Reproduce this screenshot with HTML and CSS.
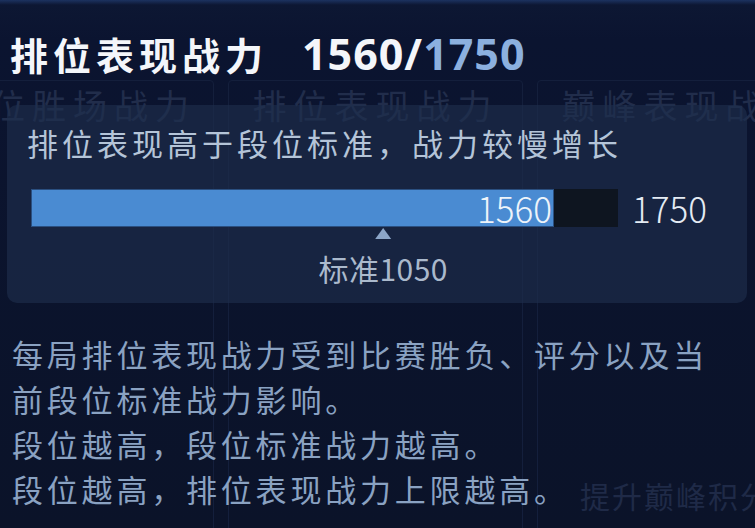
FILE: index.html
```html
<!DOCTYPE html>
<html lang="zh-CN">
<head>
  <meta charset="UTF-8">
  <meta name="viewport" content="width=device-width, initial-scale=1.0">
  <title>排位表现战力</title>
  <link rel="stylesheet" href="styles.css">
</head>
<body>
  <div class="screen">
    <!-- page underneath the popup -->
    <div class="cards">
      <div class="card"><div class="card-title">排位胜场战力</div></div>
      <div class="card"><div class="card-title">排位表现战力</div></div>
      <div class="card">
        <div class="card-title">巅峰表现战力</div>
        <div class="card-foot">提升巅峰积分</div>
      </div>
    </div>

    <!-- popup -->
    <div class="popup">
      <h2 class="popup-title">
        <span class="name">排位表现战力</span>
        <span class="score">1560/<span class="max">1750</span></span>
      </h2>

      <div class="panel">
        <p class="panel-text">排位表现高于段位标准，战力较慢增长</p>
        <div class="bar-row">
          <div class="bar">
            <div class="bar-fill" style="width: 89.1%;"><span>1560</span></div>
            <div class="marker" style="left: 60%;">
              <span class="arrow"></span>
              <span class="marker-label">标准1050</span>
            </div>
          </div>
          <span class="bar-max">1750</span>
        </div>
      </div>

      <p class="desc">
        每局排位表现战力受到比赛胜负、评分以及当<br>
        前段位标准战力影响。<br>
        段位越高，段位标准战力越高。<br>
        段位越高，排位表现战力上限越高。
      </p>
    </div>
  </div>
</body>
</html>
```

FILE: styles.css
```css
body {
  margin: 0;
  background-color: #0b1430;
  font-family: "Noto Sans CJK SC", "Noto Sans", sans-serif;
}
.screen {
  position: relative;
  width: 755px;
  height: 528px;
  overflow: hidden;
  background: linear-gradient(#1c3260 0, #0d1733 5px, #0b1430 40px, #0b1329 100%);
}

/* dimmed cards behind the popup */
.cards {
  display: grid;
  grid-template-columns: 282px 295px 295px;
  gap: 14px;
  margin-left: -68px;
  padding-top: 80px;
}
.card {
  height: 460px;
  border: 1px solid #141f3c;
  border-radius: 4px;
  position: relative;
}
.card-title {
  text-align: center;
  font-size: 34px;
  line-height: 44px;
  letter-spacing: 7px;
  color: #212d4b;
  white-space: nowrap;
  padding-top: 2px;
}
.card-foot {
  position: absolute;
  left: 42px;
  top: 392px;
  font-size: 30px;
  letter-spacing: 2px;
  color: #1f2a47;
  white-space: nowrap;
}

.popup {
  position: absolute;
  inset: 0;
  padding: 31px 8px 0 7px;
}
.popup-title {
  margin: 0;
  padding-left: 3px;
  display: flex;
  align-items: baseline;
  gap: 34px;
  line-height: 46px;
  font-weight: 700;
  color: #f4f6fa;
}
.name {
  font-size: 38px;
  letter-spacing: 5px;
}
.score {
  font-family: "Open Sans", sans-serif;
  font-size: 43px;
  letter-spacing: 1px;
}
.max { color: #8cb0df; }

.panel {
  margin-top: 28px;
  width: 740px;
  height: 198px;
  box-sizing: border-box;
  padding: 18px 0 0 20px;
  border-radius: 10px;
  background: rgba(30, 46, 78, 0.62);
}
.panel-text {
  margin: 0;
  font-size: 31px;
  line-height: 40px;
  letter-spacing: 4px;
  color: #b4c4d8;
}
.bar-row {
  display: flex;
  align-items: center;
  gap: 14px;
  margin-top: 19px;
  padding-left: 4px;
}
.bar {
  position: relative;
  width: 587px;
  height: 38px;
  background: #0e1520;
}
.bar-fill {
  height: 100%;
  box-sizing: border-box;
  border: 1px solid #2a4f80;
  background: #4a8bd2;
  display: flex;
  align-items: center;
  justify-content: flex-end;
  color: #eef4fa;
  font-size: 35px;
  font-weight: 300;
}
.bar-fill span { margin-right: 1px; }
.bar-max {
  font-size: 35px;
  font-weight: 300;
  color: #e4ebf3;
}
.marker {
  position: absolute;
  top: 100%;
  transform: translateX(-50%);
  display: flex;
  flex-direction: column;
  align-items: center;
}
.arrow {
  width: 0;
  height: 0;
  margin-top: 1px;
  border-left: 8px solid transparent;
  border-right: 8px solid transparent;
  border-bottom: 11px solid #8ca6c8;
}
.marker-label {
  margin-top: 7px;
  font-size: 30px;
  letter-spacing: 0.5px;
  white-space: nowrap;
  color: #aab9cc;
}

.desc {
  margin: 28px 0 0 5px;
  font-size: 31px;
  line-height: 45px;
  letter-spacing: 3.8px;
  color: #8aa2c2;
}
```
